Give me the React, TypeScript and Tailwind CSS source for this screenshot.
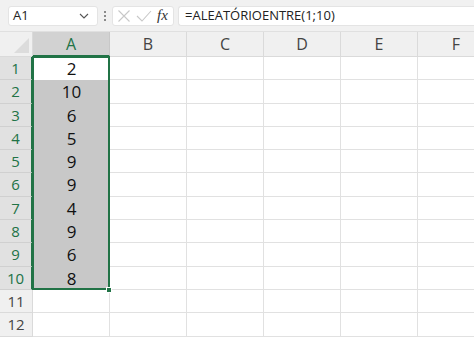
import React from "react";

const cols = ["A", "B", "C", "D", "E", "F"];
const vals = ["2", "10", "6", "5", "9", "9", "4", "9", "6", "8"];
const rows = Array.from({ length: 12 }, (_, i) => i + 1);

export default function App() {
  return (
    <div
      className="w-[474px] h-[345px] overflow-hidden bg-white relative"
      style={{ fontFamily: "'Open Sans', 'Noto Sans', sans-serif" }}
    >
      {/* top bar */}
      <div className="h-[32px] bg-[#f1f1f1] border-b border-[#e0e0e0] flex items-center pl-[8px]">
        <div className="w-[90px] h-[20px] bg-white rounded-[3px] border border-[#e4e4e4] flex items-center justify-between pl-[4px] pr-[8px]">
          <span className="text-[13px] text-[#222] leading-none">A1</span>
          <svg width="10" height="6" viewBox="0 0 10 6">
            <path d="M1 1 L5 5 L9 1" stroke="#555" strokeWidth="1.1" fill="none" />
          </svg>
        </div>
        <div className="w-[14px] flex flex-col items-center gap-[2px]">
          <div className="w-[2px] h-[2px] bg-[#8a8a8a]" />
          <div className="w-[2px] h-[2px] bg-[#8a8a8a]" />
          <div className="w-[2px] h-[2px] bg-[#8a8a8a]" />
        </div>
        <div className="w-[62px] h-[20px] bg-white rounded-[3px] border border-[#e4e4e4] flex items-center pl-[4px]">
          <svg width="14" height="14" viewBox="0 0 14 14">
            <path d="M1.5 1.5 L12.5 12.5 M12.5 1.5 L1.5 12.5" stroke="#c8c8c8" strokeWidth="1.1" />
          </svg>
          <svg width="16" height="14" viewBox="0 0 16 14" className="ml-[5px]">
            <path d="M1 7 L6 12 L15 2" stroke="#c8c8c8" strokeWidth="1.1" fill="none" />
          </svg>
          <span
            className="ml-[5px] text-[15px] italic text-[#333] leading-none"
            style={{ fontFamily: "'Liberation Serif', serif" }}
          >
            fx
          </span>
        </div>
        <div className="ml-[4px] flex-1 h-[20px] bg-white rounded-l-[3px] border border-r-0 border-[#e4e4e4] flex items-center pl-[6px]">
          <span className="text-[13px] text-[#222] leading-none">=ALEATÓRIOENTRE(1;10)</span>
        </div>
      </div>

      {/* grid */}
      <div className="relative">
        <div className="grid grid-cols-[33px_repeat(6,77px)]">
          {/* header row */}
          <div className="h-[25px] bg-[#f0f0f0] border-r border-b border-[#dadada] relative overflow-hidden">
            <svg width="33" height="25" className="absolute inset-0">
              <polygon points="29,6 29,21 14,21" fill="#dcdcdc" />
            </svg>
          </div>
          {cols.map((c) =>
            c === "A" ? (
              <div
                key={c}
                className="h-[25px] bg-[#d2d2d2] border-r border-[#c8c8c8] border-b-2 border-b-[#217346] flex items-center justify-center text-[16px] text-[#217346]"
              >
                {c}
              </div>
            ) : (
              <div
                key={c}
                className="h-[25px] bg-[#f0f0f0] border-r border-b border-[#dadada] flex items-center justify-center text-[16px] text-[#444]"
              >
                {c}
              </div>
            )
          )}
          {rows.map((r) => (
            <React.Fragment key={r}>
              <div
                className={
                  r <= 10
                    ? "h-[23.3px] bg-[#e1e1e1] border-b border-[#d0d0d0] border-r-2 border-r-[#217346] flex items-center justify-center text-[15px] text-[#217346]"
                    : "h-[23.3px] bg-[#f0f0f0] border-b border-r border-[#dadada] flex items-center justify-center text-[15px] text-[#444]"
                }
              >
                {r}
              </div>
              {cols.map((c) => {
                if (c === "A" && r <= 10) {
                  return (
                    <div
                      key={c}
                      className={
                        (r === 1 ? "bg-white" : "bg-[#c8c8c8]") +
                        " h-[23.3px] flex items-center justify-center text-[17px] text-[#111]"
                      }
                    >
                      {vals[r - 1]}
                    </div>
                  );
                }
                return (
                  <div key={c} className="h-[23.3px] border-r border-b border-[#e1e1e1]" />
                );
              })}
            </React.Fragment>
          ))}
        </div>
        {/* selection border */}
        <div className="absolute left-[32px] top-[24px] w-[78px] h-[234px] border-2 border-[#217346] pointer-events-none" />
        <div className="absolute left-[106px] top-[255px] w-[6px] h-[6px] bg-[#217346] border border-white pointer-events-none" />
      </div>
    </div>
  );
}
